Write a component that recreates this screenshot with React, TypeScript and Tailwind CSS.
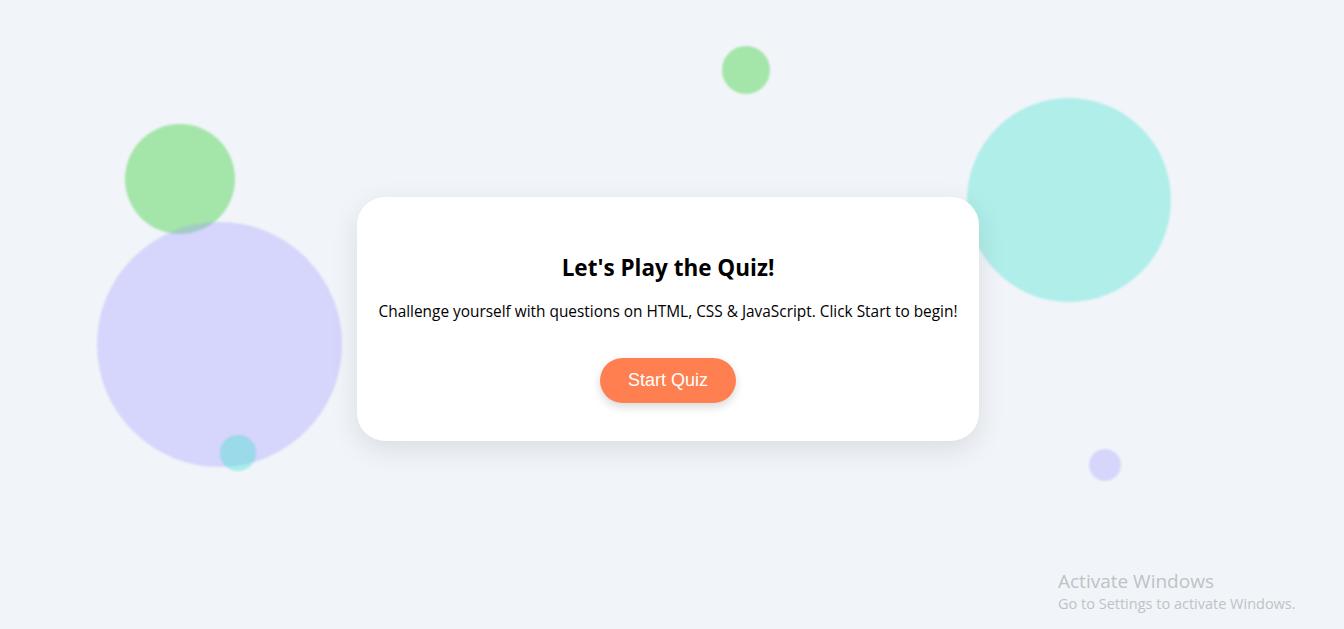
import React from "react";

const bubbles = [
  { key: "g1", cls: "left-[125px] top-[124px] w-[110px] h-[110px] bg-[#32cd32]/40" },
  { key: "p1", cls: "left-[97px] top-[222px] w-[245px] h-[245px] bg-[#a29bfe]/35" },
  { key: "c1", cls: "left-[220px] top-[435px] w-[36px] h-[36px] bg-[#40e0d0]/40" },
  { key: "g2", cls: "left-[722px] top-[46px] w-[48px] h-[48px] bg-[#32cd32]/40" },
  { key: "c2", cls: "left-[967px] top-[98px] w-[204px] h-[204px] bg-[#40e0d0]/37" },
  { key: "p2", cls: "left-[1089px] top-[449px] w-[32px] h-[32px] bg-[#a29bfe]/35" },
];

export default function App() {
  return (
    <div className="relative min-h-screen w-full overflow-hidden bg-[#f1f5f9]">
      {/* floating bubbles */}
      {bubbles.map((b) => (
        <div key={b.key} className={`absolute rounded-full blur-[1px] ${b.cls}`} />
      ))}

      {/* card */}
      <div className="relative z-10 flex pl-[357px] pt-[197px]">
        <div
          className="flex w-[622px] h-[244px] flex-col items-center rounded-[28px] bg-white pt-[55px] shadow-[0_8px_28px_rgba(0,0,0,0.1)]"
          style={{ fontFamily: '"Open Sans", "Noto Sans", sans-serif' }}
        >
          <h2 className="text-[22.5px] font-bold leading-[32px] text-black">Let's Play the Quiz!</h2>
          <p className="mt-[17px] text-[15.4px] leading-[22px] text-black">
            Challenge yourself with questions on HTML, CSS &amp; JavaScript. Click Start to begin!
          </p>
          <button
            className="mt-[35px] rounded-full bg-[#ff7f50] px-[28px] py-[12px] text-[18px] leading-[21px] text-white shadow-[0_4px_10px_rgba(0,0,0,0.15)]"
            style={{ fontFamily: '"Liberation Sans", Arial, sans-serif' }}
          >
            Start Quiz
          </button>
        </div>
      </div>

      {/* OS watermark */}
      <div
        className="absolute left-[1058px] top-[569px] text-[#bfc2c6]"
        style={{ fontFamily: '"Open Sans", "Noto Sans", sans-serif' }}
      >
        <div className="text-[19px] leading-[25px]">Activate Windows</div>
        <div className="text-[14.5px] leading-[20px]">Go to Settings to activate Windows.</div>
      </div>
    </div>
  );
}
